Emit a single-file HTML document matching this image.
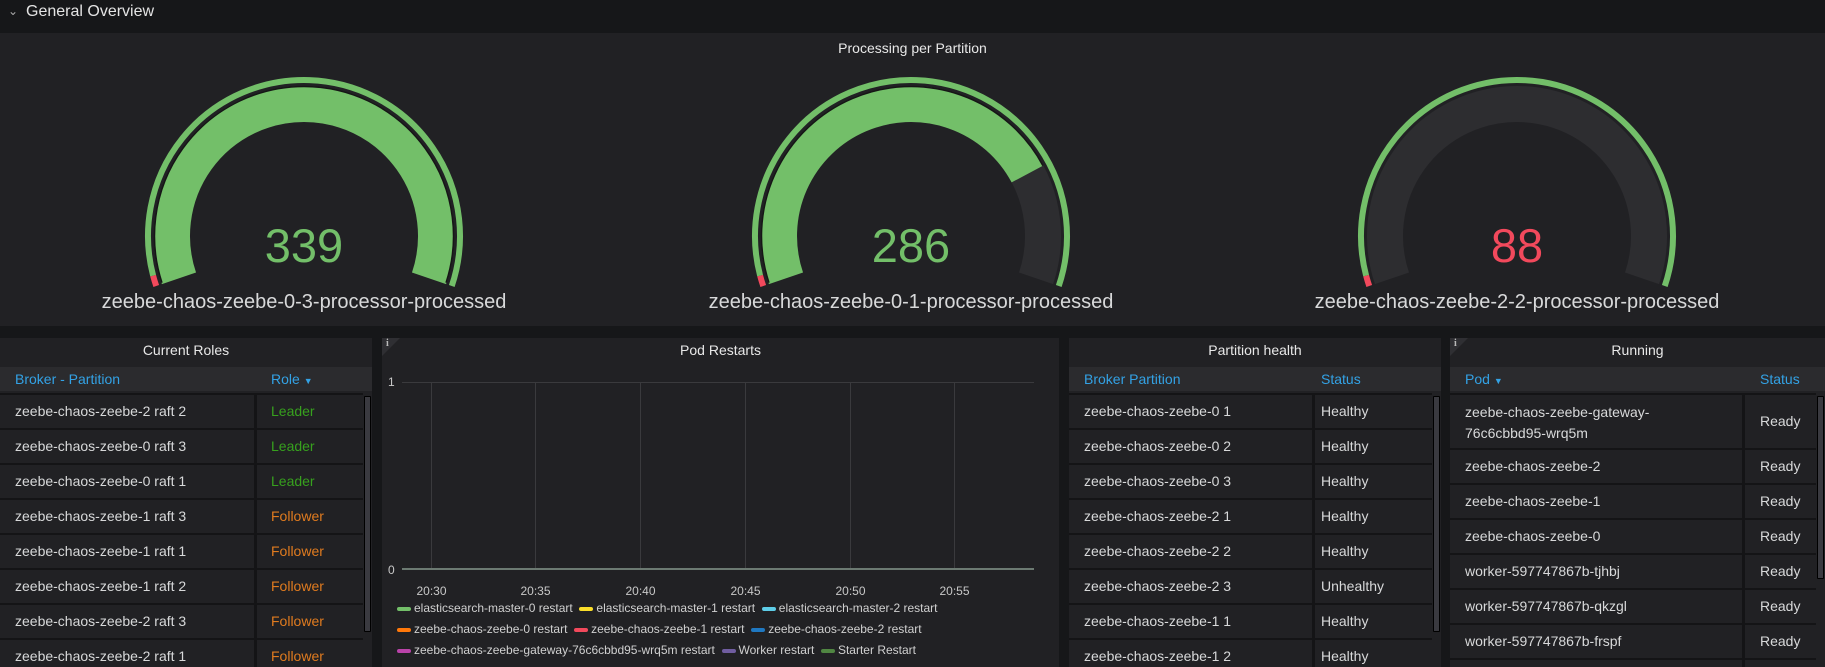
<!DOCTYPE html>
<html><head><meta charset="utf-8"><style>
*{box-sizing:border-box;margin:0;padding:0}
body{width:1825px;height:667px;background:#161719;font-family:"Liberation Sans",sans-serif;color:#d8d9da;overflow:hidden;position:relative}
.row{position:absolute;left:0;top:0;height:28px;width:1825px}
.row span{position:absolute;left:26px;top:3px;font-size:16px;color:#e4e4e4}
.row i{position:absolute;left:8px;top:4px;font-style:normal;font-size:12px;color:#aaa}
.panel{position:absolute;background:#212124;overflow:hidden}
.ptitle{position:absolute;left:0;right:0;text-align:center;font-size:14px;color:#e8e8e8}
.info{position:absolute;left:0;top:0;width:0;height:0;border-top:18px solid #2f2f33;border-right:18px solid transparent}
.info b{position:absolute;left:4px;top:-18px;font-size:10px;color:#bbb;font-family:"Liberation Serif",serif}
.hdr{position:absolute;left:0;right:0;top:29px;height:24px;background:#2b2b2e;color:#33a2e5;font-size:14px}
.hdr div{position:absolute;top:4px}
.r{position:absolute;left:0;height:33px;background:#212124;border-top:2px solid #141416;font-size:14px}
.r div{position:absolute}
.sep{position:absolute;top:0;bottom:0;width:3px;background:#141416}
.sb{position:absolute;width:7px;background:#3a3a40;border:1px solid #000;border-radius:1px}
.lg{display:inline-block;width:14px;height:4px;border-radius:2px;vertical-align:middle;margin-right:3px}
</style></head><body>
<div class="row"><i>⌄</i><span>General Overview</span></div>

<div class="panel" style="left:0;top:33px;width:1825px;height:293px">
<div class="ptitle" style="top:7px">Processing per Partition</div>
<svg id="g" width="1825" height="293" style="position:absolute;left:0;top:0"></svg>
</div>

<div class="panel" style="left:0;top:338px;width:372px;height:329px">
<div class="ptitle" style="top:4px">Current Roles</div>
<div class="hdr"><div style="left:15px">Broker - Partition</div><div style="left:271px">Role <span style="font-size:9px">▼</span></div></div>
<div id="cr"></div>
<div class="sb" style="left:364px;top:58px;height:236px"></div>
</div>

<div class="panel" style="left:382px;top:338px;width:677px;height:329px">
<div class="info"><b>i</b></div>
<div class="ptitle" style="top:4px">Pod Restarts</div>
<svg width="677" height="329" style="position:absolute;left:0;top:0;font-family:'Liberation Sans',sans-serif">
<g stroke="#3a3a3d" stroke-width="1">
<line x1="20" y1="44.5" x2="652" y2="44.5"/>
<line x1="49.5" y1="44" x2="49.5" y2="231"/><line x1="153.5" y1="44" x2="153.5" y2="231"/><line x1="258.5" y1="44" x2="258.5" y2="231"/><line x1="363.5" y1="44" x2="363.5" y2="231"/><line x1="468.5" y1="44" x2="468.5" y2="231"/><line x1="572.5" y1="44" x2="572.5" y2="231"/>
</g>
<line x1="20" y1="231" x2="652" y2="231" stroke="#6c7a72" stroke-width="2"/>
<g fill="#c8c8c8" font-size="12"><text x="6" y="48">1</text><text x="6" y="236">0</text>
<g text-anchor="middle"><text x="49.5" y="257">20:30</text><text x="153.5" y="257">20:35</text><text x="258.5" y="257">20:40</text><text x="363.5" y="257">20:45</text><text x="468.5" y="257">20:50</text><text x="572.5" y="257">20:55</text></g></g>
</svg>
<div style="position:absolute;left:0;top:0;width:677px;height:329px;font-size:12px;color:#d0d0d0">
<div style="position:absolute;left:15px;top:263px;white-space:nowrap">
<span class="lg" style="background:#73bf69"></span>elasticsearch-master-0 restart &nbsp;<span class="lg" style="background:#fade2a"></span>elasticsearch-master-1 restart &nbsp;<span class="lg" style="background:#5ecde8"></span>elasticsearch-master-2 restart</div>
<div style="position:absolute;left:15px;top:284px;white-space:nowrap">
<span class="lg" style="background:#ff780a"></span>zeebe-chaos-zeebe-0 restart &nbsp;<span class="lg" style="background:#f2495c"></span>zeebe-chaos-zeebe-1 restart &nbsp;<span class="lg" style="background:#1f78c1"></span>zeebe-chaos-zeebe-2 restart</div>
<div style="position:absolute;left:15px;top:305px;white-space:nowrap">
<span class="lg" style="background:#ba43a9"></span>zeebe-chaos-zeebe-gateway-76c6cbbd95-wrq5m restart &nbsp;<span class="lg" style="background:#705da0"></span>Worker restart &nbsp;<span class="lg" style="background:#508642"></span>Starter Restart</div>
</div>
</div>

<div class="panel" style="left:1069px;top:338px;width:372px;height:329px">
<div class="ptitle" style="top:4px">Partition health</div>
<div class="hdr"><div style="left:15px">Broker Partition</div><div style="left:252px">Status</div></div>
<div id="ph"></div>
<div class="sb" style="left:364px;top:58px;height:236px"></div>
</div>

<div class="panel" style="left:1450px;top:338px;width:375px;height:329px">
<div class="info"><b>i</b></div>
<div class="ptitle" style="top:4px">Running</div>
<div class="hdr"><div style="left:15px">Pod <span style="font-size:9px">▼</span></div><div style="left:310px">Status</div></div>
<div id="rn"></div>
<div class="sb" style="left:367px;top:58px;height:183px"></div>
</div>

<script>
function P(cx,cy,r,a){a=a*Math.PI/180;return (cx+r*Math.cos(a)).toFixed(2)+' '+(cy-r*Math.sin(a)).toFixed(2);}
function arc(cx,cy,r,a1,a2,w,c){var large=(a1-a2)>180?1:0;return '<path d="M'+P(cx,cy,r,a1)+' A'+r+' '+r+' 0 '+large+' 1 '+P(cx,cy,r,a2)+'" fill="none" stroke="'+c+'" stroke-width="'+w+'"/>';}
var S=198.7,E=-18.7,s='';
var gs=[[304,'339',1,'#73bf69','zeebe-chaos-zeebe-0-3-processor-processed'],[911,'286',0.785,'#73bf69','zeebe-chaos-zeebe-0-1-processor-processed'],[1517,'88',0,'#f2495c','zeebe-chaos-zeebe-2-2-processor-processed']];
gs.forEach(function(g){var cx=g[0],cy=203;
s+=arc(cx,cy,156,S,S-4,6,'#f2495c')+arc(cx,cy,156,S-4,E,6,'#73bf69');
s+=arc(cx,cy,132,S,E,36,'#2d2d30');
if(g[2]>0){var a=S-(S-E)*g[2];s+=arc(cx,cy,132,S,a,36,'#73bf69');
s+=arc(cx,cy,149.5,S-0.5,Math.max(a,E+0.5),1.5,'#161616');}
s+='<text x="'+cx+'" y="229" text-anchor="middle" font-size="47" fill="'+g[3]+'" font-family="Liberation Sans,sans-serif">'+g[1]+'</text>';
s+='<text x="'+cx+'" y="275" text-anchor="middle" font-size="20" fill="#d8d9da" font-family="Liberation Sans,sans-serif">'+g[4]+'</text>';});
document.getElementById('g').innerHTML=s;
function tbl(id,rows,w,sepx,c2x,top){var h='',y=top;rows.forEach(function(r){var hh=r[2]||35;
h+='<div class="r" style="top:'+y+'px;width:'+w+'px;height:'+hh+'px"><div style="left:15px;top:'+(hh>40?7:8)+'px;line-height:'+(hh>40?'21px':'17px')+'">'+r[0]+'</div><div class="sep" style="left:'+sepx+'px"></div><div style="left:'+c2x+'px;top:'+((hh-19)/2)+'px;color:'+(r[3]||'#d8d9da')+'">'+r[1]+'</div></div>';y+=hh;});
document.getElementById(id).innerHTML=h;}
var L='#37a11e',F='#e07b1f';
tbl('cr',[['zeebe-chaos-zeebe-2 raft 2','Leader',0,L],['zeebe-chaos-zeebe-0 raft 3','Leader',0,L],['zeebe-chaos-zeebe-0 raft 1','Leader',0,L],['zeebe-chaos-zeebe-1 raft 3','Follower',0,F],['zeebe-chaos-zeebe-1 raft 1','Follower',0,F],['zeebe-chaos-zeebe-1 raft 2','Follower',0,F],['zeebe-chaos-zeebe-2 raft 3','Follower',0,F],['zeebe-chaos-zeebe-2 raft 1','Follower',0,F]],363,254,271,55);
tbl('ph',[['zeebe-chaos-zeebe-0 1','Healthy'],['zeebe-chaos-zeebe-0 2','Healthy'],['zeebe-chaos-zeebe-0 3','Healthy'],['zeebe-chaos-zeebe-2 1','Healthy'],['zeebe-chaos-zeebe-2 2','Healthy'],['zeebe-chaos-zeebe-2 3','Unhealthy'],['zeebe-chaos-zeebe-1 1','Healthy'],['zeebe-chaos-zeebe-1 2','Healthy']],363,243,252,55);
tbl('rn',[['zeebe-chaos-zeebe-gateway-<br>76c6cbbd95-wrq5m','Ready',55],['zeebe-chaos-zeebe-2','Ready'],['zeebe-chaos-zeebe-1','Ready'],['zeebe-chaos-zeebe-0','Ready'],['worker-597747867b-tjhbj','Ready'],['worker-597747867b-qkzgl','Ready'],['worker-597747867b-frspf','Ready'],['','']],366,292,310,55);
</script>
</body></html>
